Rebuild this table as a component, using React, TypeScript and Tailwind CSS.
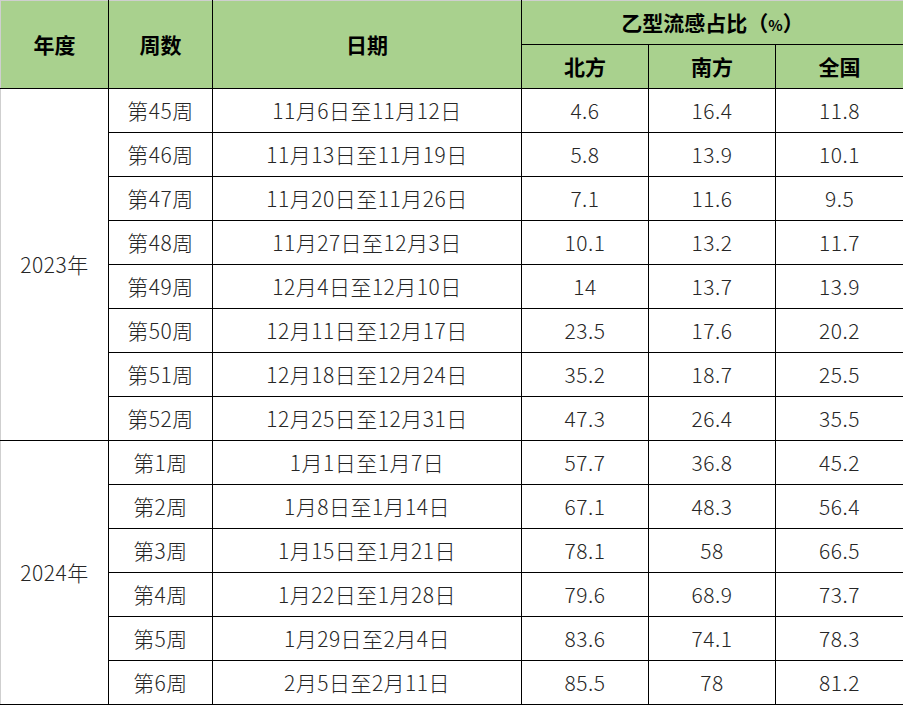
const rows2023 = [
  ["第45周", "11月6日至11月12日", "4.6", "16.4", "11.8"],
  ["第46周", "11月13日至11月19日", "5.8", "13.9", "10.1"],
  ["第47周", "11月20日至11月26日", "7.1", "11.6", "9.5"],
  ["第48周", "11月27日至12月3日", "10.1", "13.2", "11.7"],
  ["第49周", "12月4日至12月10日", "14", "13.7", "13.9"],
  ["第50周", "12月11日至12月17日", "23.5", "17.6", "20.2"],
  ["第51周", "12月18日至12月24日", "35.2", "18.7", "25.5"],
  ["第52周", "12月25日至12月31日", "47.3", "26.4", "35.5"],
];

const rows2024 = [
  ["第1周", "1月1日至1月7日", "57.7", "36.8", "45.2"],
  ["第2周", "1月8日至1月14日", "67.1", "48.3", "56.4"],
  ["第3周", "1月15日至1月21日", "78.1", "58", "66.5"],
  ["第4周", "1月22日至1月28日", "79.6", "68.9", "73.7"],
  ["第5周", "1月29日至2月4日", "83.6", "74.1", "78.3"],
  ["第6周", "2月5日至2月11日", "85.5", "78", "81.2"],
];

const cell = "border border-black h-[44px] p-0 text-center align-middle";
const head =
  "border border-black bg-[#a9d18e] p-0 text-center align-middle font-bold text-black text-[21px] tracking-normal";

function YearBlock({ year, rows }: { year: string; rows: string[][] }) {
  return (
    <>
      {rows.map((r, i) => (
        <tr key={r[0]}>
          {i === 0 && (
            <td rowSpan={rows.length} className={`${cell} border-l-[#cfcfcf]`}>
              {year}
            </td>
          )}
          {r.map((v, j) => (
            <td key={j} className={cell}>
              {v}
            </td>
          ))}
        </tr>
      ))}
    </>
  );
}

export default function App() {
  return (
    <div className="w-[903px] h-[705px] bg-white overflow-hidden">
      <table
        className="table-fixed border-collapse w-[903px] text-[21px] font-light leading-none tracking-[0.5px] text-[#262626]"
        style={{ fontFamily: '"Noto Sans CJK SC", "Noto Sans", sans-serif' }}
      >
        <colgroup>
          <col className="w-[108px]" />
          <col className="w-[104px]" />
          <col className="w-[309px]" />
          <col className="w-[127px]" />
          <col className="w-[127px]" />
          <col className="w-[128px]" />
        </colgroup>
        <thead>
          <tr>
            <th rowSpan={2} className={`${head} border-l-[#cfcfcf] border-t-[#cfcfcf]`}>
              年度
            </th>
            <th rowSpan={2} className={`${head} border-t-[#cfcfcf]`}>
              周数
            </th>
            <th rowSpan={2} className={`${head} border-t-[#cfcfcf]`}>
              日期
            </th>
            <th colSpan={3} className={`${head} h-[44px] border-t-[#cfcfcf]`}>
              乙型流感占比（<span className="text-[15px]">%</span>）
            </th>
          </tr>
          <tr>
            <th className={`${head} h-[44px]`}>北方</th>
            <th className={`${head} h-[44px]`}>南方</th>
            <th className={`${head} h-[44px]`}>全国</th>
          </tr>
        </thead>
        <tbody>
          <YearBlock year="2023年" rows={rows2023} />
          <YearBlock year="2024年" rows={rows2024} />
        </tbody>
      </table>
    </div>
  );
}
